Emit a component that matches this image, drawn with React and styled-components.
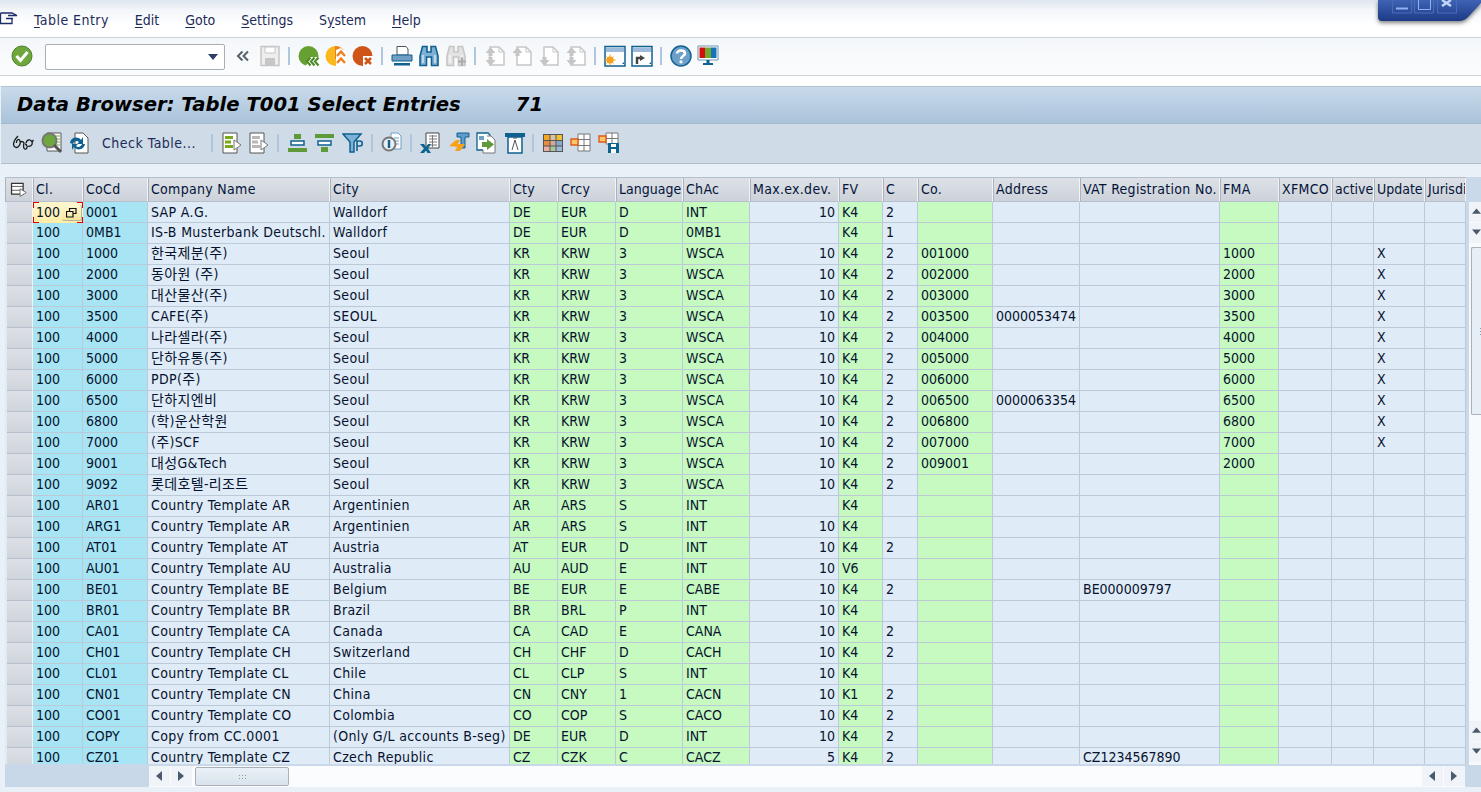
import styled, { createGlobalStyle } from 'styled-components';

const GlobalStyle = createGlobalStyle`
  html, body {
    margin: 0;
    padding: 0;
    background: #e9f0f8;
    overflow: hidden;
  }
  body {
    font-family: "DejaVu Sans", "Noto Sans CJK KR", sans-serif;
    font-stretch: condensed;
    font-size: 14px;
    color: #04143a;
  }
`;

const Page = styled.div`
  position: relative;
  width: 1481px;
  height: 792px;
  display: flex;
  flex-direction: column;
  overflow: hidden;
`;

const MenuBar = styled.div`
  height: 38px;
  box-sizing: border-box;
  padding: 2px 0 0 0;
  display: flex;
  align-items: center;
  background: linear-gradient(#dfe5ef 0, #f3f6fa 10px, #ffffff 24px, #ffffff 100%);
  border-bottom: 1px solid #cfd2d6;
`;

const MenuIconSlot = styled.div`
  width: 34px;
  display: flex;
  height: 20px;
  padding-top: 2px;
  box-sizing: border-box;
  align-items: flex-start;
`;

const MenuItem = styled.span`
  margin-right: 26px;
  color: #1c2b5a;
  letter-spacing: ${(props) => props.$spacing || 0}px;
  u {
    text-underline-offset: 2px;
  }
`;

const WindowControls = styled.svg`
  position: absolute;
  right: 0;
  top: 0;
  filter: drop-shadow(0 2px 2px rgba(0, 0, 0, 0.5));
`;

const SystemBar = styled.div`
  height: 38px;
  box-sizing: border-box;
  display: flex;
  align-items: center;
  padding: 0 0 1px 8px;
  background: linear-gradient(#f4f7fa, #fbfcfd);
  border-bottom: 1px solid #cfd2d6;
`;

const Gap = styled.div`
  height: 10px;
  background: #ffffff;
`;

const TitleBar = styled.div`
  height: 38px;
  box-sizing: border-box;
  display: flex;
  align-items: center;
  padding: 0 0 2px 16px;
  margin-left: 1px;
  font-family: "DejaVu Sans", sans-serif;
  font-stretch: normal;
  font-weight: bold;
  font-style: italic;
  font-size: 19.6px;
  color: #000000;
  background: linear-gradient(#c9daeb, #a9c3da);
  border-top: 1px solid #b5c2d0;
  border-bottom: 1px solid #a4b6c9;
`;

const TitleCount = styled.span`
  margin-left: 55px;
`;

const AppBar = styled.div`
  height: 40px;
  box-sizing: border-box;
  display: flex;
  align-items: center;
  padding: 0 0 1px 8px;
  margin-left: 1px;
  background: #cfdce8;
  border-bottom: 1px solid #b0bdcc;
`;

const IconButton = styled.div`
  width: 27px;
  height: 28px;
  flex: none;
  margin-left: ${(props) => props.$ml || 0}px;
  display: flex;
  align-items: center;
  justify-content: center;
`;

const Separator = styled.div`
  width: 2px;
  height: 18px;
  flex: none;
  margin: 0 ${(props) => props.$mr ?? 5}px 0 ${(props) => props.$ml ?? 5}px;
  background: #b0c6dc;
`;

const ComboBox = styled.div`
  width: 180px;
  height: 26px;
  box-sizing: border-box;
  margin: 2px 0 0 10px;
  display: flex;
  align-items: center;
  justify-content: flex-end;
  padding-right: 6px;
  background: #ffffff;
  border: 1px solid #a9aeb4;
  border-radius: 2px;
`;

const ComboArrow = styled.div`
  width: 0;
  height: 0;
  border-left: 5px solid transparent;
  border-right: 5px solid transparent;
  border-top: 6px solid #2c3e66;
`;

const ToolbarLabel = styled.span`
  width: 96px;
  flex: none;
  margin: 0 13px 0 10px;
  color: #1c2b5a;
  letter-spacing: 0.5px;
  white-space: nowrap;
`;

const Content = styled.div`
  flex: 1;
  display: flex;
  flex-direction: column;
  padding-top: 13px;
  background: #e9f0f8;
  min-height: 0;
`;

const TableFrame = styled.div`
  display: flex;
  margin-left: 5px;
  height: 588px;
  background: #c9d9e9;
`;

const Table = styled.div`
  width: 1461px;
  height: 587px;
  flex: none;
  overflow: hidden;
  border-top: 1px solid #b5bfca;
  box-sizing: border-box;
  background: #dfebf6;
`;

const Row = styled.div`
  display: grid;
  grid-template-columns: ${(props) => props.$template};
  height: ${(props) => (props.$header ? 24 : 21)}px;
`;

const HeaderCell = styled.div`
  box-sizing: border-box;
  padding-left: 2px;
  line-height: 22px;
  letter-spacing: ${(props) => (props.$tight ? 0 : 0.3)}px;
  white-space: nowrap;
  overflow: hidden;
  background: linear-gradient(#dde1e7, #cdd2da);
  border-right: 1px solid #f0f3f7;
  border-left: 1px solid #aab3be;
  border-bottom: 1px solid #b6c0cc;
  color: #04143a;
`;

const HeaderIconCell = styled(HeaderCell)`
  display: flex;
  padding: 3px 0 0 4px;
`;

const cellColors = {
  key: '#a7e5f4',
  green: '#c6fac0',
  normal: '#dfebf6',
};

const Cell = styled.div`
  position: relative;
  box-sizing: border-box;
  padding: 0 ${(props) => (props.$right ? 3 : 0)}px 0 ${(props) => (props.$right ? 0 : 3)}px;
  text-align: ${(props) => (props.$right ? 'right' : 'left')};
  line-height: ${(props) => (props.$first ? 20 : 18)}px;
  letter-spacing: ${(props) => (props.$spaced ? 0.35 : 0)}px;
  white-space: nowrap;
  overflow: hidden;
  background: ${(props) => cellColors[props.$kind]};
  border-right: 1px solid #bccad8;
  border-bottom: 1px solid #bccad8;
  color: #06122e;
`;

const SelectorCell = styled.div`
  box-sizing: border-box;
  margin-left: 2px;
  background: linear-gradient(#dce0e6, #d0d5dc);
  border-right: 1px solid #f2f5f8;
  border-bottom: 1px solid #b6c0cc;
`;

const ActiveCell = styled.div`
  position: relative;
  box-sizing: border-box;
  padding-left: 3px;
  line-height: 20px;
  background: linear-gradient(#fff6cf, #ffeda6);
  color: #06122e;
`;

const Corner = styled.span`
  position: absolute;
  width: 5px;
  height: 5px;
  ${(props) => props.$pos.includes('t') ? 'top: 0; border-top: 1px solid #e80000;' : 'bottom: 0; border-bottom: 1px solid #e80000;'}
  ${(props) => props.$pos.includes('l') ? 'left: 0; border-left: 1px solid #e80000;' : 'right: 0; border-right: 1px solid #e80000;'}
`;

const ValueHelp = styled.div`
  position: absolute;
  left: 29px;
  top: 3px;
  width: 19px;
  height: 15px;
  display: flex;
  align-items: center;
  justify-content: center;
  background: linear-gradient(#fff8d4, #f5e59b);
  border-right: 1px solid #b9b39a;
  border-bottom: 1px solid #b9b39a;
  border-radius: 2px;
`;

const VerticalBar = styled.div`
  width: 12px;
  margin-left: 3px;
  margin-top: 25px;
  flex: none;
  display: flex;
  flex-direction: column;
  background: #f7fafd;
`;

const ScrollButton = styled.div`
  width: ${(props) => props.$w || 21}px;
  height: ${(props) => props.$h || 20}px;
  flex: none;
  margin: ${(props) => props.$m || '0'};
  display: flex;
  align-items: center;
  justify-content: ${(props) => props.$vertical ? 'flex-start' : 'center'};
  background: #f0f4f9;
  padding-left: ${(props) => props.$vertical ? 3 : 0}px;
  box-sizing: border-box;
`;

const VerticalThumb = styled.div`
  height: 168px;
  box-sizing: border-box;
  margin: 4px 0 0 2px;
  display: flex;
  align-items: center;
  padding-left: 7px;
  background: #e6eef6;
  border: 1px solid #a9b0b8;
  border-right: none;
  border-radius: 2px 0 0 2px;
  color: #8e98a3;
`;

const Spacer = styled.div`
  flex: 1;
`;

const BottomPanel = styled.div`
  margin-left: 5px;
  height: 22px;
  display: flex;
  align-items: stretch;
  padding-left: 144px;
  background: #c9d8e8;
`;

const HorizontalBar = styled.div`
  width: 1316px;
  height: 21px;
  margin-top: 1px;
  display: flex;
  background: #fbfcfe;
`;

const HorizontalThumb = styled.div`
  width: 94px;
  margin: 1px 0 1px 3px;
  flex: none;
  box-sizing: border-box;
  display: flex;
  align-items: center;
  justify-content: center;
  background: linear-gradient(#eaf0f6, #d9e3ed);
  border: 1px solid #a9b0b8;
  border-radius: 2px;
`;

const Grip = styled.div`
  width: 9px;
  height: 5px;
  background-image: radial-gradient(#8e98a3 0.7px, transparent 0.8px);
  background-size: 3px 3px;
`;

const VerticalGrip = styled.div`
  width: 3px;
  height: 9px;
  background-image: radial-gradient(#8e98a3 0.7px, transparent 0.8px);
  background-size: 3px 3px;
`;

const FootGap = styled.div`
  flex: 1;
  background: #e9f0f8;
`;

const Tri = ({ d }) => {
  const paths = {
    up: 'M0 7 L5 1 L10 7 Z',
    down: 'M0 1 L10 1 L5 7 Z',
    left: 'M7 0 L7 10 L1 5 Z',
    right: 'M1 0 L1 10 L7 5 Z',
  };
  return (
    <svg width="10" height="10" viewBox="0 0 10 10">
      <path d={paths[d]} fill="#4a5a6c" />
    </svg>
  );
};

const Svg = ({ children, size = 22 }) => (
  <svg width={size} height={size} viewBox="0 0 22 22" fill="none">
    {children}
  </svg>
);

const blue = '#0f6190';
const midBlue = '#6f9fc4';
const grey = '#c6c6c6';

const Icons = {
  check: () => (
    <Svg>
      <circle cx="11" cy="11" r="10" fill="#6ea83c" stroke="#4d7f2a" />
      <path d="M5.5 11 L9.5 15.5 L16.5 7" stroke="#fff" strokeWidth="3" />
    </Svg>
  ),
  chevrons: () => (
    <svg width="14" height="12" viewBox="0 0 14 12" fill="none">
      <path d="M6.5 1.5 L2 6 L6.5 10.5 M12 1.5 L7.5 6 L12 10.5" stroke="#55606c" strokeWidth="2" />
    </svg>
  ),
  save: () => (
    <Svg>
      <path d="M2 1.5 H20 V20.5 H2 Z" fill="#eee" stroke={grey} strokeWidth="1.5" />
      <path d="M6 2 H16 V8 H6 Z" fill="#fff" stroke={grey} />
      <path d="M6 13 H16 V20 H6 Z" fill={grey} />
    </Svg>
  ),
  back: () => (
    <Svg>
      <circle cx="10.5" cy="11" r="10" fill="#66a032" />
      <path d="M8 21 L12 12 H22 V21 Z" fill="#fff" />
      <path d="M12.5 12.5 L9 16.5 L12.5 20.5 M16.5 12.5 L13 16.5 L16.5 20.5 M20.5 12.5 L17 16.5 L20.5 20.5" stroke="#4f8c28" strokeWidth="2.2" />
    </Svg>
  ),
  exit: () => (
    <Svg>
      <circle cx="10.5" cy="11" r="10" fill="#fbb81e" />
      <path d="M10 1 A10 10 0 0 1 20.5 11 V14 H10 Z" fill="#ef7f1a" />
      <path d="M11 5 L16 3 L21 7 V21 H11 Z" fill="#fff" />
      <path d="M12 11 L16 6.5 L20 11 M12 18 L16 13.5 L20 18" stroke="#ef7f1a" strokeWidth="2.4" />
    </Svg>
  ),
  cancel: () => (
    <Svg>
      <circle cx="10.5" cy="11" r="10" fill="#cf5417" />
      <path d="M11 11 H21 V21 H11 Z" fill="#fff" />
      <path d="M13 13 L19 19 M19 13 L13 19" stroke="#cf5417" strokeWidth="2.6" />
    </Svg>
  ),
  print: () => (
    <Svg>
      <path d="M6 1.5 H15 L17 4 V10 H6 Z" fill="#fff" stroke="#555" />
      <path d="M1 10 H21 V16 H1 Z" fill={midBlue} stroke={blue} />
      <path d="M3 18 H19 V20.5 H3 Z" fill={blue} />
    </Svg>
  ),
  find: ({ disabled }) => {
    const line = disabled ? grey : blue;
    const fill = disabled ? '#e2e2e2' : '#7fb0d6';
    return (
      <Svg>
        <path d="M4.5 1.5 H9 V7 H13 V1.5 H17.5 L20 11 V20.5 H13.5 V12 H8.5 V20.5 H2 V11 Z" fill={fill} stroke={line} strokeWidth="1.6" />
        <path d="M5 10 V18 M17 10 V18" stroke="#fff" strokeWidth="1.4" opacity="0.7" />
        {disabled && <path d="M13 16.5 H21 M17 12.5 V20.5" stroke="#aaa" strokeWidth="2.2" />}
      </Svg>
    );
  },
  pageArrows: ({ up, down }) => (
    <Svg>
      <path d="M6 2 H15 L20 7 V20 H6 Z" fill="#fff" stroke={grey} strokeWidth="1.5" />
      <path d="M15 2 V7 H20" stroke={grey} />
      {up && <path d="M1.5 8 L6.5 2 L11.5 8 H8.5 V11 H4.5 V8 Z" fill={grey} />}
      {down && <path d="M1.5 15 L6.5 21 L11.5 15 H8.5 V12 H4.5 V15 Z" fill={grey} />}
    </Svg>
  ),
  sessionNew: () => (
    <Svg>
      <path d="M1 1.5 H21 V21 H1 Z" fill="#fff" stroke={blue} strokeWidth="1.5" />
      <path d="M2 2.5 H20 V7 H2 Z" fill="#9dbadb" />
      <circle cx="6" cy="15" r="3.6" fill="#f7a11a" />
      <path d="M6 9.5 V20.5 M0.5 15 H11.5 M2.5 11.5 L9.5 18.5 M9.5 11.5 L2.5 18.5" stroke="#f7a11a" />
      <path d="M18 19 H20 V17 Z" fill={blue} />
    </Svg>
  ),
  shortcut: () => (
    <Svg>
      <path d="M1 1.5 H21 V21 H1 Z" fill="#fff" stroke={blue} strokeWidth="1.5" />
      <path d="M2 2.5 H20 V7 H2 Z" fill="#9dbadb" />
      <path d="M6 19 V13 H10" stroke="#444" strokeWidth="2.4" />
      <path d="M9 10 L14 13 L9 16 Z" fill="#444" />
      <path d="M18 19 H20 V17 Z" fill={blue} />
    </Svg>
  ),
  help: () => (
    <Svg>
      <circle cx="11" cy="11" r="10" fill="#6c9fca" stroke={blue} strokeWidth="1.5" />
      <path d="M7 8.5 C7 4.5 15 4.5 15 8.5 C15 11 11 11 11 14" stroke="#fff" strokeWidth="2.6" />
      <rect x="9.6" y="15.5" width="2.8" height="2.8" fill="#fff" />
    </Svg>
  ),
  monitor: () => (
    <Svg>
      <path d="M1 1 H21 V15 H1 Z" fill="#fff" stroke="#6d93b5" />
      <path d="M2.5 2.5 H8 V13 H2.5 Z" fill="#d40d0d" />
      <path d="M8 2.5 H14 V13 H8 Z" fill="#6fa82c" />
      <path d="M14 2.5 H19.5 V13 H14 Z" fill="#1474b8" />
      <path d="M9.5 15 H12.5 V18 H16 V20 H6 V18 H9.5 Z" fill={blue} />
    </Svg>
  ),
  glasses: () => (
    <Svg>
      <path d="M6 4 C2 8 0 13 3 15 C6 17 9 12 8 9 C7 6 4 8 4.5 11 M8 11 C9 9 11 9 12 11 C11 15 12 18 14 17 C16 16 15 12 13 12 M14 11 C15 7 19 7 20 10 C21 13 18 15 16 14 M20 10 L21.5 8" stroke="#1a1a1a" strokeWidth="1.3" />
    </Svg>
  ),
  docSearch: () => (
    <Svg>
      <path d="M6 1 H20 V19 H6 Z" fill="#fff" stroke="#555" />
      <path d="M15 4 H19 M15 7 H19 M15 10 H19 M15 13 H19" stroke="#6ea83c" />
      <circle cx="8.5" cy="8.5" r="7" fill="#6ea83c" stroke="#777" strokeWidth="2" />
      <path d="M13 13 L20 20" stroke="#555" strokeWidth="3" />
    </Svg>
  ),
  docRefresh: () => (
    <Svg>
      <path d="M7 1 H15 L20 6 V21 H7 Z" fill="#fff" stroke="#555" />
      <path d="M2 11 C3 5 10 4 13 8 L15 5 V12 H9 L11 10 C9 8 6 9 5 12 Z" fill={blue} />
      <path d="M17 12 C16 18 9 19 6 15 L4 18 V12 H10 L8 14 C10 16 13 15 14 12 Z" fill={blue} />
    </Svg>
  ),
  listArrow: ({ muted }) => (
    <Svg>
      <path d="M2 1 H16 V21 H2 Z" fill="#fff" stroke="#555" />
      <path d="M4 4 H12 V7 H4 Z M4 8.5 H10 V11.5 H4 Z M4 13 H12 V16 H4 Z" fill={muted ? '#b8b8b8' : '#7ba81a'} />
      <path d="M13 8 L20 13 L13 18 Z" fill="#fff" stroke="#777" />
    </Svg>
  ),
  sortUp: () => (
    <Svg>
      <path d="M7 2 H14 V7 H7 Z" fill="#5f9a3a" />
      <path d="M4 9 H17 V13 H4 Z" fill="#fff" stroke={blue} strokeWidth="1.5" />
      <path d="M1 16 H20 V20 H1 Z" fill="#5f9a3a" />
    </Svg>
  ),
  sortDown: () => (
    <Svg>
      <path d="M1 2 H20 V6 H1 Z" fill="#5f9a3a" />
      <path d="M4 9 H17 V13 H4 Z" fill="#fff" stroke={blue} strokeWidth="1.5" />
      <path d="M7 15 H14 V20 H7 Z" fill="#5f9a3a" />
    </Svg>
  ),
  filter: () => (
    <Svg>
      <path d="M1 2 H19 L12 10 V20 H8 V10 Z" fill="#7fb0d6" stroke={blue} strokeWidth="1.5" />
      <path d="M14 9 H18 C21 9 21 14 18 14 H15 M15 9 V19" stroke={blue} strokeWidth="1.6" />
    </Svg>
  ),
  details: () => (
    <Svg>
      <path d="M10 1 H17 L20 4 V17 H10 Z" fill="#fff" stroke={midBlue} />
      <path d="M13 6 H18 M13 9 H18 M13 12 H18" stroke={midBlue} />
      <circle cx="8" cy="12" r="6.5" fill="#e9eef3" stroke="#777" strokeWidth="2" />
      <path d="M8 8 V16" stroke={blue} strokeWidth="2.4" />
    </Svg>
  ),
  excel: () => (
    <Svg>
      <path d="M7 1 H20 V16 H7 Z" fill="#fff" stroke="#444" />
      <path d="M10 4 H18 M10 7 H18 M10 10 H18 M10 13 H18 M13.5 3 V15" stroke="#777" />
      <path d="M1 12 H5 L7 15 L9 12 H12 L9 16.5 L12 21 H8.5 L7 18.5 L5 21 H1 L5 16.5 Z" fill={blue} />
    </Svg>
  ),
  texts: () => (
    <Svg>
      <path d="M9 1 H21 V5 H17 V16 H13 V5 H9 Z" fill="#5f9ccb" stroke={blue} />
      <path d="M1 14 L8 8 H12 L10 12 H17 L12 19 H7 L9 15 Z" fill="#f7a11a" />
    </Svg>
  ),
  docSend: () => (
    <Svg>
      <path d="M2 1 H13 L15 3 V18 H2 Z" fill="#fff" stroke={blue} strokeWidth="1.3" />
      <path d="M4 4 H9 V8 H4 Z" fill={midBlue} />
      <path d="M12 4 H16 L20 8 V21 H8 V18" stroke="#777" fill="#fff" />
      <path d="M7 10 H12 V7 L19 12.5 L12 18 V15 H7 Z" fill="#5f9a3a" />
    </Svg>
  ),
  template: () => (
    <Svg>
      <path d="M1 1 H21 V5 H1 Z" fill={blue} />
      <path d="M4 5 H18 V21 H4 Z" fill="#fff" stroke={blue} strokeWidth="1.5" />
      <path d="M11 8 L8 18 M11 8 L14 18 M9 6 H13" stroke="#555" />
    </Svg>
  ),
  grid: () => (
    <Svg>
      <path d="M1 2 H21 V20 H1 Z" fill="#555" />
      <path d="M2 3 H7.5 V8 H2 Z" fill="#f5a623" />
      <path d="M8.5 3 H13.5 V8 H8.5 Z" fill="#d9c6a0" />
      <path d="M14.5 3 H20 V8 H14.5 Z" fill="#f2c230" />
      <path d="M2 9 H7.5 V13.5 H2 Z" fill="#e88b3a" />
      <path d="M8.5 9 H13.5 V13.5 H8.5 Z" fill="#d8a798" />
      <path d="M14.5 9 H20 V13.5 H14.5 Z" fill="#84a9cf" />
      <path d="M2 14.5 H7.5 V19 H2 Z" fill="#e8b0a0" />
      <path d="M8.5 14.5 H13.5 V19 H8.5 Z" fill="#a8c8a0" />
      <path d="M14.5 14.5 H20 V19 H14.5 Z" fill="#9dbadb" />
    </Svg>
  ),
  layout: () => (
    <Svg>
      <path d="M8 2 H20 V19 H8 Z M14 2 V19 M8 7.5 H20 M8 13.5 H20" stroke="#777" fill="#fff" />
      <path d="M1 7 H8 V13 H1 Z" fill="#fbc66a" stroke="#e05a18" strokeWidth="1.4" />
    </Svg>
  ),
  layoutSave: () => (
    <Svg>
      <path d="M8 1 H20 V12 H8 Z M14 1 V12 M8 6.5 H20" stroke="#777" fill="#fff" />
      <path d="M1 4 H8 V10 H1 Z" fill="#fbc66a" stroke="#e05a18" strokeWidth="1.4" />
      <path d="M10 11 H21 V21 H10 Z" fill={blue} />
      <path d="M13 12 H18 V15 H13 Z M13 17 H18 V21 H13 Z" fill="#fff" />
    </Svg>
  ),
  selectAll: () => (
    <Svg size={17}>
      <path d="M2 3 H17 V17 H2 Z" fill="#fff" stroke="#333" strokeWidth="1.6" />
      <path d="M2 7 H17 M2 12 H17" stroke="#333" />
      <path d="M13 10 L21 15 L13 20 Z" fill="#fff" stroke="#555" />
    </Svg>
  ),
  menu: () => (
    <svg width="18" height="13" viewBox="0 0 18 13" fill="none">
      <path d="M0.5 1 H12 L17 3.5 H8 M0.5 1 V11.5 H12 V6.5 M6 6.5 H13" stroke="#1d2d66" strokeWidth="1.3" />
    </svg>
  ),
  copyBoxes: () => (
    <svg width="11" height="10" viewBox="0 0 11 10" fill="none">
      <path d="M3.5 3 V0.5 H10 V5.5 H7.5 M0.5 3.5 H7 V9 H0.5 Z" stroke="#111" strokeWidth="1.2" />
    </svg>
  ),
};

const columns = [
  { label: 'Cl.', width: 50, kind: 'key' },
  { label: 'CoCd', width: 65, kind: 'key' },
  { label: 'Company Name', width: 182, kind: 'normal', spaced: true },
  { label: 'City', width: 180, kind: 'normal', spaced: true },
  { label: 'Cty', width: 48, kind: 'green' },
  { label: 'Crcy', width: 58, kind: 'green' },
  { label: 'Language', width: 67, kind: 'green', tight: true },
  { label: 'ChAc', width: 67, kind: 'green' },
  { label: 'Max.ex.dev.', width: 89, kind: 'normal', right: true },
  { label: 'FV', width: 44, kind: 'green' },
  { label: 'C', width: 35, kind: 'normal' },
  { label: 'Co.', width: 75, kind: 'green' },
  { label: 'Address', width: 87, kind: 'normal' },
  { label: 'VAT Registration No.', width: 140, kind: 'normal' },
  { label: 'FMA', width: 59, kind: 'green' },
  { label: 'XFMCO', width: 53, kind: 'normal' },
  { label: 'active', width: 42, kind: 'normal', tight: true },
  { label: 'Update', width: 51, kind: 'normal', tight: true },
  { label: 'Jurisdi', width: 41, kind: 'normal', tight: true },
];

const template = `28px ${columns.map((c) => `${c.width}px`).join(' ')}`;

const korean = (code, name, city, co, address, fma, update) =>
  ['100', code, name, city, 'KR', 'KRW', '3', 'WSCA', '10', 'K4', '2', co, address, '', fma, '', '', update, ''];

const country = (code, name, city, cty, crcy, lang, chart, max, fv, c, vat = '') =>
  ['100', code, name, city, cty, crcy, lang, chart, max, fv, c, '', '', vat, '', '', '', '', ''];

const rows = [
  country('0001', 'SAP A.G.', 'Walldorf', 'DE', 'EUR', 'D', 'INT', '10', 'K4', '2'),
  country('0MB1', 'IS-B Musterbank Deutschl.', 'Walldorf', 'DE', 'EUR', 'D', '0MB1', '', 'K4', '1'),
  korean('1000', '한국제분(주)', 'Seoul', '001000', '', '1000', 'X'),
  korean('2000', '동아원 (주)', 'Seoul', '002000', '', '2000', 'X'),
  korean('3000', '대산물산(주)', 'Seoul', '003000', '', '3000', 'X'),
  korean('3500', 'CAFE(주)', 'SEOUL', '003500', '0000053474', '3500', 'X'),
  korean('4000', '나라셀라(주)', 'Seoul', '004000', '', '4000', 'X'),
  korean('5000', '단하유통(주)', 'Seoul', '005000', '', '5000', 'X'),
  korean('6000', 'PDP(주)', 'Seoul', '006000', '', '6000', 'X'),
  korean('6500', '단하지엔비', 'Seoul', '006500', '0000063354', '6500', 'X'),
  korean('6800', '(학)운산학원', 'Seoul', '006800', '', '6800', 'X'),
  korean('7000', '(주)SCF', 'Seoul', '007000', '', '7000', 'X'),
  korean('9001', '대성G&Tech', 'Seoul', '009001', '', '2000', ''),
  korean('9092', '롯데호텔-리조트', 'Seoul', '', '', '', ''),
  country('AR01', 'Country Template AR', 'Argentinien', 'AR', 'ARS', 'S', 'INT', '', 'K4', ''),
  country('ARG1', 'Country Template AR', 'Argentinien', 'AR', 'ARS', 'S', 'INT', '10', 'K4', ''),
  country('AT01', 'Country Template AT', 'Austria', 'AT', 'EUR', 'D', 'INT', '10', 'K4', '2'),
  country('AU01', 'Country Template AU', 'Australia', 'AU', 'AUD', 'E', 'INT', '10', 'V6', ''),
  country('BE01', 'Country Template BE', 'Belgium', 'BE', 'EUR', 'E', 'CABE', '10', 'K4', '2', 'BE000009797'),
  country('BR01', 'Country Template BR', 'Brazil', 'BR', 'BRL', 'P', 'INT', '10', 'K4', ''),
  country('CA01', 'Country Template CA', 'Canada', 'CA', 'CAD', 'E', 'CANA', '10', 'K4', '2'),
  country('CH01', 'Country Template CH', 'Switzerland', 'CH', 'CHF', 'D', 'CACH', '10', 'K4', '2'),
  country('CL01', 'Country Template CL', 'Chile', 'CL', 'CLP', 'S', 'INT', '10', 'K4', ''),
  country('CN01', 'Country Template CN', 'China', 'CN', 'CNY', '1', 'CACN', '10', 'K1', '2'),
  country('CO01', 'Country Template CO', 'Colombia', 'CO', 'COP', 'S', 'CACO', '10', 'K4', '2'),
  country('COPY', 'Copy from CC.0001', '(Only G/L accounts B-seg)', 'DE', 'EUR', 'D', 'INT', '10', 'K4', '2'),
  country('CZ01', 'Country Template CZ', 'Czech Republic', 'CZ', 'CZK', 'C', 'CACZ', '5', 'K4', '2', 'CZ1234567890'),
];

export default function App() {
  return (
    <Page>
      <GlobalStyle />
      <MenuBar>
        <MenuIconSlot>
          <Icons.menu />
        </MenuIconSlot>
        <MenuItem $spacing={0.45}><u>T</u>able Entry</MenuItem>
        <MenuItem><u>E</u>dit</MenuItem>
        <MenuItem><u>G</u>oto</MenuItem>
        <MenuItem><u>S</u>ettings</MenuItem>
        <MenuItem>S<u>y</u>stem</MenuItem>
        <MenuItem><u>H</u>elp</MenuItem>
      </MenuBar>
      <WindowControls width="104" height="28" viewBox="0 0 104 28" fill="none">
        <defs>
          <linearGradient id="winBlue" x1="0" y1="0" x2="0" y2="1">
            <stop offset="0" stopColor="#3f63b4" />
            <stop offset="1" stopColor="#1c3a86" />
          </linearGradient>
        </defs>
        <path d="M1 0 H104 V3 L92 16 Q88 21 82 21 L5 21 Q1 21 1 17 Z" fill="url(#winBlue)" />
        <path d="M15.5 0 V13 H34.5 V0 M37.5 0 V13 H56.5 V0 M60.5 0 V13 H79.5 V0" stroke="#4b6cbb" />
        <path d="M19 8.5 H31" stroke="#8db4f0" strokeWidth="2" />
        <path d="M41.5 0 V9.5 H53.5 V0" stroke="#8db4f0" />
        <path d="M65 0 L74 6 M74 0 L65 6" stroke="#c3d6f8" strokeWidth="2.4" />
      </WindowControls>
      <SystemBar>
        <IconButton><Icons.check /></IconButton>
        <ComboBox><ComboArrow /></ComboBox>
        <IconButton $ml={4}><Icons.chevrons /></IconButton>
        <IconButton><Icons.save /></IconButton>
        <Separator />
        <IconButton><Icons.back /></IconButton>
        <IconButton><Icons.exit /></IconButton>
        <IconButton><Icons.cancel /></IconButton>
        <Separator />
        <IconButton><Icons.print /></IconButton>
        <IconButton><Icons.find /></IconButton>
        <IconButton><Icons.find disabled /></IconButton>
        <Separator />
        <IconButton><Icons.pageArrows up down /></IconButton>
        <IconButton><Icons.pageArrows up /></IconButton>
        <IconButton><Icons.pageArrows down /></IconButton>
        <IconButton><Icons.pageArrows up down /></IconButton>
        <Separator />
        <IconButton><Icons.sessionNew /></IconButton>
        <IconButton><Icons.shortcut /></IconButton>
        <Separator />
        <IconButton><Icons.help /></IconButton>
        <IconButton><Icons.monitor /></IconButton>
      </SystemBar>
      <Gap />
      <TitleBar>
        Data Browser: Table T001 Select Entries
        <TitleCount>71</TitleCount>
      </TitleBar>
      <AppBar>
        <IconButton><Icons.glasses /></IconButton>
        <IconButton $ml={2}><Icons.docSearch /></IconButton>
        <IconButton><Icons.docRefresh /></IconButton>
        <ToolbarLabel>Check Table...</ToolbarLabel>
        <Separator $ml={0} />
        <IconButton><Icons.listArrow /></IconButton>
        <IconButton><Icons.listArrow muted /></IconButton>
        <Separator />
        <IconButton><Icons.sortUp /></IconButton>
        <IconButton><Icons.sortDown /></IconButton>
        <IconButton $ml={1}><Icons.filter /></IconButton>
        <Separator />
        <IconButton><Icons.details /></IconButton>
        <Separator $mr={4} />
        <IconButton><Icons.excel /></IconButton>
        <IconButton $ml={2}><Icons.texts /></IconButton>
        <IconButton><Icons.docSend /></IconButton>
        <IconButton $ml={2}><Icons.template /></IconButton>
        <Separator $ml={4} />
        <IconButton><Icons.grid /></IconButton>
        <IconButton $ml={1}><Icons.layout /></IconButton>
        <IconButton $ml={1}><Icons.layoutSave /></IconButton>
      </AppBar>
      <Content>
        <TableFrame>
          <Table>
            <Row $header $template={template}>
              <HeaderIconCell><Icons.selectAll /></HeaderIconCell>
              {columns.map((c) => (
                <HeaderCell key={c.label} $tight={c.tight}>{c.label}</HeaderCell>
              ))}
            </Row>
            {rows.map((row, r) => (
              <Row key={row[1]} $template={template}>
                <SelectorCell />
                {row.map((value, i) =>
                  r === 0 && i === 0 ? (
                    <ActiveCell key={i}>
                      {value}
                      <ValueHelp><Icons.copyBoxes /></ValueHelp>
                      <Corner $pos="tl" />
                      <Corner $pos="tr" />
                      <Corner $pos="bl" />
                      <Corner $pos="br" />
                    </ActiveCell>
                  ) : (
                    <Cell
                      key={i}
                      $kind={columns[i].kind}
                      $right={columns[i].right}
                      $spaced={columns[i].spaced}
                      $first={r === 0}
                    >
                      {value}
                    </Cell>
                  )
                )}
              </Row>
            ))}
          </Table>
          <VerticalBar>
            <ScrollButton $w={12} $vertical><Tri d="up" /></ScrollButton>
            <ScrollButton $w={12} $m="1px 0 0 0" $vertical><Tri d="down" /></ScrollButton>
            <VerticalThumb><VerticalGrip /></VerticalThumb>
            <Spacer />
            <ScrollButton $w={12} $vertical><Tri d="up" /></ScrollButton>
            <ScrollButton $w={12} $m="1px 0 3px 0" $vertical><Tri d="down" /></ScrollButton>
          </VerticalBar>
        </TableFrame>
        <BottomPanel>
          <HorizontalBar>
            <ScrollButton><Tri d="left" /></ScrollButton>
            <ScrollButton $m="0 0 0 1px"><Tri d="right" /></ScrollButton>
            <HorizontalThumb><Grip /></HorizontalThumb>
            <Spacer />
            <ScrollButton><Tri d="left" /></ScrollButton>
            <ScrollButton $m="0 0 0 1px"><Tri d="right" /></ScrollButton>
          </HorizontalBar>
        </BottomPanel>
        <FootGap />
      </Content>
    </Page>
  );
}
